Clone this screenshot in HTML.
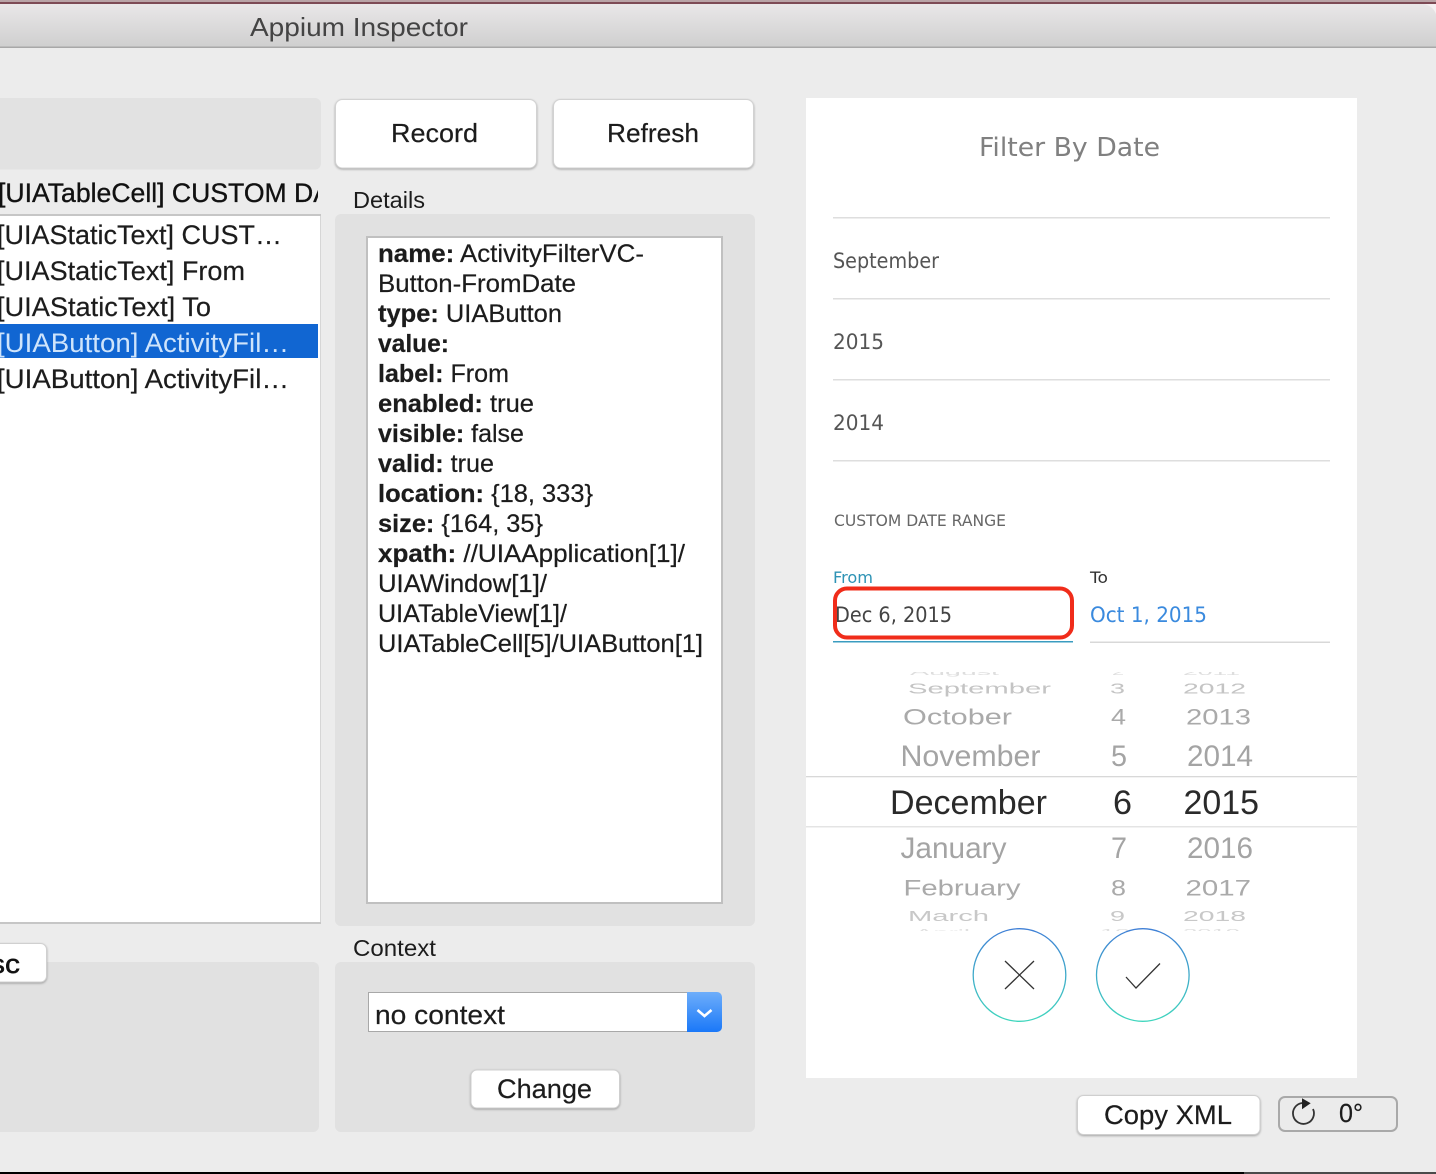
<!DOCTYPE html>
<html><head><meta charset="utf-8"><title>Appium Inspector</title>
<style>
html,body{margin:0;padding:0;background:#ececec;width:1436px;height:1174px;overflow:hidden}
svg{display:block;position:absolute;left:0;top:0}
text{font-family:"Liberation Sans",sans-serif;fill:#1c1c1c;white-space:pre}
.h{font-family:"DejaVu Sans",sans-serif}
.b{font-weight:bold}
.btn{filter:drop-shadow(0 1px 1px rgba(0,0,0,.3))}
</style></head><body>
<svg width="1436" height="1174" viewBox="0 0 1436 1174" xmlns="http://www.w3.org/2000/svg">
<defs>
<linearGradient id="tb" x1="0" y1="0" x2="0" y2="1"><stop offset="0" stop-color="#e9e7e8"/><stop offset="1" stop-color="#cfcfcf"/></linearGradient>
<linearGradient id="ring" x1="0" y1="0" x2="0" y2="1"><stop offset="0" stop-color="#3f7fd6"/><stop offset="1" stop-color="#3fd6bd"/></linearGradient>
<linearGradient id="sel" x1="0" y1="0" x2="0" y2="1"><stop offset="0" stop-color="#6eaefa"/><stop offset="1" stop-color="#1a78f8"/></linearGradient>
<clipPath id="pick"><rect x="806" y="672" width="551" height="259"/></clipPath>
<clipPath id="listhead"><rect x="0" y="170" width="318" height="44"/></clipPath>
<clipPath id="list"><rect x="0" y="214" width="318" height="706"/></clipPath>
</defs>

<!-- window chrome -->
<rect x="0" y="0" width="1436" height="3" fill="#b9a3a6"/>
<rect x="0" y="2" width="1436" height="2" fill="#7d4a55"/>
<rect x="0" y="4" width="1436" height="43" fill="url(#tb)"/>
<rect x="0" y="46.5" width="1436" height="1.5" fill="#a8a8a8"/>
<path d="M1424 4 L1436 4 L1436 14 Q1433 6 1424 4Z" fill="#f5f0f2"/>
<text x="250" y="36" font-size="26" style="fill:#444" textLength="218" lengthAdjust="spacingAndGlyphs">Appium Inspector</text>

<!-- left column -->
<rect x="-10" y="98" width="331" height="71.5" rx="6" fill="#e2e2e2"/>
<g clip-path="url(#listhead)"><text x="-2" y="202" font-size="26.6" stroke="#111" stroke-width=".35" style="fill:#111">[UIATableCell] CUSTOM DATE RANGE</text></g>
<rect x="-4" y="214" width="325" height="710" fill="#d6d6d6"/>
<rect x="-4" y="214" width="325" height="2" fill="#c6c6c6"/>
<rect x="-4" y="922" width="325" height="2" fill="#c6c6c6"/>
<rect x="-4" y="216" width="324" height="706" fill="#fff"/>
<rect x="0" y="324" width="318" height="34" fill="#1166d2"/>
<g clip-path="url(#list)" stroke="#1c1c1c" stroke-width=".2">
<text x="-3" y="244" font-size="27" textLength="285" lengthAdjust="spacingAndGlyphs">[UIAStaticText] CUST…</text>
<text x="-3" y="280" font-size="27" textLength="248" lengthAdjust="spacingAndGlyphs">[UIAStaticText] From</text>
<text x="-3" y="316" font-size="27" textLength="214" lengthAdjust="spacingAndGlyphs">[UIAStaticText] To</text>
<text x="-3" y="352" font-size="27" textLength="292" lengthAdjust="spacingAndGlyphs" stroke="none" style="fill:#cfe4fb">[UIAButton] ActivityFil…</text>
<text x="-3" y="388" font-size="27" textLength="292" lengthAdjust="spacingAndGlyphs">[UIAButton] ActivityFil…</text>
</g>
<rect x="-10" y="962" width="329" height="170" rx="6" fill="#e1e1e1"/>
<rect class="btn" x="-20" y="943.5" width="66.5" height="38.5" rx="6" fill="#fff" stroke="#d0d0d0" stroke-width="1"/>
<text x="-30" y="973" font-size="27" textLength="50" lengthAdjust="spacingAndGlyphs" stroke="#111" stroke-width=".5" style="fill:#111">Esc</text>

<!-- record / refresh -->
<rect class="btn" x="335.5" y="99.5" width="201" height="68.5" rx="7" fill="#fff" stroke="#d2d2d2"/>
<rect class="btn" x="553.5" y="99.5" width="200" height="68.5" rx="7" fill="#fff" stroke="#d2d2d2"/>
<text x="391" y="142" font-size="26" textLength="87" lengthAdjust="spacingAndGlyphs" stroke="#1c1c1c" stroke-width=".2">Record</text>
<text x="607" y="142" font-size="26" textLength="92" lengthAdjust="spacingAndGlyphs" stroke="#1c1c1c" stroke-width=".2">Refresh</text>

<!-- details -->
<text x="353" y="208" font-size="23" textLength="72" lengthAdjust="spacingAndGlyphs">Details</text>
<rect x="335" y="214" width="420" height="712" rx="6" fill="#e1e1e1"/>
<rect x="367" y="237" width="355" height="666" fill="#fff" stroke="#c0c0c0" stroke-width="2"/>
<g stroke="#111" stroke-width=".2">
<text x="378" y="262" font-size="25" textLength="266" lengthAdjust="spacingAndGlyphs"><tspan class="b">name:</tspan> ActivityFilterVC-</text>
<text x="378" y="292" font-size="25" textLength="198" lengthAdjust="spacingAndGlyphs">Button-FromDate</text>
<text x="378" y="322" font-size="25" textLength="184" lengthAdjust="spacingAndGlyphs"><tspan class="b">type:</tspan> UIAButton</text>
<text x="378" y="352" font-size="25" textLength="71" lengthAdjust="spacingAndGlyphs" class="b">value:</text>
<text x="378" y="382" font-size="25" textLength="131" lengthAdjust="spacingAndGlyphs"><tspan class="b">label:</tspan> From</text>
<text x="378" y="412" font-size="25" textLength="156" lengthAdjust="spacingAndGlyphs"><tspan class="b">enabled:</tspan> true</text>
<text x="378" y="442" font-size="25" textLength="146" lengthAdjust="spacingAndGlyphs"><tspan class="b">visible:</tspan> false</text>
<text x="378" y="472" font-size="25" textLength="116" lengthAdjust="spacingAndGlyphs"><tspan class="b">valid:</tspan> true</text>
<text x="378" y="502" font-size="25" textLength="215" lengthAdjust="spacingAndGlyphs"><tspan class="b">location:</tspan> {18, 333}</text>
<text x="378" y="532" font-size="25" textLength="165" lengthAdjust="spacingAndGlyphs"><tspan class="b">size:</tspan> {164, 35}</text>
<text x="378" y="562" font-size="25" textLength="307" lengthAdjust="spacingAndGlyphs"><tspan class="b">xpath:</tspan> //UIAApplication[1]/</text>
<text x="378" y="592" font-size="25" textLength="169" lengthAdjust="spacingAndGlyphs">UIAWindow[1]/</text>
<text x="378" y="622" font-size="25" textLength="189" lengthAdjust="spacingAndGlyphs">UIATableView[1]/</text>
<text x="378" y="652" font-size="25" textLength="325" lengthAdjust="spacingAndGlyphs">UIATableCell[5]/UIAButton[1]</text>
</g>

<!-- context -->
<text x="353" y="956" font-size="23" textLength="83" lengthAdjust="spacingAndGlyphs">Context</text>
<rect x="335" y="962" width="420" height="170" rx="6" fill="#e1e1e1"/>
<rect x="368.5" y="992.5" width="320" height="39" fill="#fff" stroke="#a8a8a8"/>
<path d="M687 992 H717 a5 5 0 0 1 5 5 V1027 a5 5 0 0 1 -5 5 H687Z" fill="url(#sel)"/>
<path d="M697.5 1010 L704.5 1016 L711.5 1010" fill="none" stroke="#fff" stroke-width="2.6"/>
<text x="375" y="1024" font-size="27" textLength="130" lengthAdjust="spacingAndGlyphs" stroke="#1c1c1c" stroke-width=".2">no context</text>
<rect class="btn" x="471" y="1070" width="148.5" height="38" rx="6" fill="#fff" stroke="#cfcfcf"/>
<text x="497" y="1098" font-size="27" textLength="95" lengthAdjust="spacingAndGlyphs" stroke="#1c1c1c" stroke-width=".2">Change</text>

<!-- phone screen -->
<rect x="806" y="98" width="551" height="980" fill="#fff"/>
<text class="h" x="979" y="156" font-size="26" textLength="181" lengthAdjust="spacingAndGlyphs" style="fill:#808080">Filter By Date</text>
<rect x="833" y="217" width="497" height="1.5" fill="#dedede"/>
<rect x="833" y="298" width="497" height="1.5" fill="#dedede"/>
<rect x="833" y="379" width="497" height="1.5" fill="#dedede"/>
<rect x="833" y="460" width="497" height="1.5" fill="#dedede"/>
<text class="h" x="833" y="268" font-size="21" textLength="106" lengthAdjust="spacingAndGlyphs" style="fill:#555">September</text>
<text class="h" x="833" y="349" font-size="21" textLength="51" lengthAdjust="spacingAndGlyphs" style="fill:#555">2015</text>
<text class="h" x="833" y="430" font-size="21" textLength="51" lengthAdjust="spacingAndGlyphs" style="fill:#555">2014</text>
<text class="h" x="834" y="526" font-size="16" textLength="172" lengthAdjust="spacingAndGlyphs" style="fill:#666">CUSTOM DATE RANGE</text>
<text class="h" x="833" y="583" font-size="16" textLength="40" lengthAdjust="spacingAndGlyphs" style="fill:#2e93b5">From</text>
<text class="h" x="1090" y="583" font-size="16" textLength="18" lengthAdjust="spacingAndGlyphs" style="fill:#333">To</text>
<text class="h" x="835" y="622" font-size="21" textLength="117" lengthAdjust="spacingAndGlyphs" style="fill:#444">Dec 6, 2015</text>
<text class="h" x="1090" y="622" font-size="21" textLength="117" lengthAdjust="spacingAndGlyphs" style="fill:#3a8ade">Oct 1, 2015</text>
<rect x="833" y="641" width="240" height="1.5" fill="#3a9cc0"/>
<rect x="1090" y="641.5" width="240" height="1.5" fill="#d8d8d8"/>
<rect x="835" y="588.5" width="237" height="49" rx="12" fill="none" stroke="#f02c1a" stroke-width="4"/>

<!-- picker -->
<g clip-path="url(#pick)">
<text transform="translate(910 675) scale(1 .28)" font-size="29" textLength="89" lengthAdjust="spacingAndGlyphs" style="fill:#dedede">August</text>
<text transform="translate(1112 675) scale(1 .28)" font-size="29" textLength="12" lengthAdjust="spacingAndGlyphs" style="fill:#dedede">2</text>
<text transform="translate(1183 675) scale(1 .28)" font-size="29" textLength="57" lengthAdjust="spacingAndGlyphs" style="fill:#dedede">2011</text>
<text transform="translate(908 693.5) scale(1 .5)" font-size="29" textLength="143" lengthAdjust="spacingAndGlyphs" style="fill:#c4c4c4">September</text>
<text transform="translate(1110 693.5) scale(1 .5)" font-size="29" textLength="15" lengthAdjust="spacingAndGlyphs" style="fill:#c4c4c4">3</text>
<text transform="translate(1183 693.5) scale(1 .5)" font-size="29" textLength="63" lengthAdjust="spacingAndGlyphs" style="fill:#c4c4c4">2012</text>
<text transform="translate(903 724.5) scale(1 .78)" font-size="29" textLength="109" lengthAdjust="spacingAndGlyphs" style="fill:#aaa">October</text>
<text transform="translate(1111 724.5) scale(1 .78)" font-size="29" textLength="15" lengthAdjust="spacingAndGlyphs" style="fill:#aaa">4</text>
<text transform="translate(1186 724.5) scale(1 .78)" font-size="29" textLength="65" lengthAdjust="spacingAndGlyphs" style="fill:#aaa">2013</text>
<text x="900.5" y="766" font-size="30" textLength="140" lengthAdjust="spacingAndGlyphs" style="fill:#a4a4a4">November</text>
<text x="1111" y="766" font-size="30" textLength="16" lengthAdjust="spacingAndGlyphs" style="fill:#a4a4a4">5</text>
<text x="1187" y="766" font-size="30" textLength="66" lengthAdjust="spacingAndGlyphs" style="fill:#a4a4a4">2014</text>
<text x="890" y="814" font-size="34" textLength="157" lengthAdjust="spacingAndGlyphs" style="fill:#2a2a2a">December</text>
<text x="1113" y="814" font-size="34" textLength="19" lengthAdjust="spacingAndGlyphs" style="fill:#2a2a2a">6</text>
<text x="1183.5" y="814" font-size="34" textLength="75.5" lengthAdjust="spacingAndGlyphs" style="fill:#2a2a2a">2015</text>
<text x="900.5" y="858" font-size="30" textLength="106" lengthAdjust="spacingAndGlyphs" style="fill:#a4a4a4">January</text>
<text x="1111" y="858" font-size="30" textLength="16" lengthAdjust="spacingAndGlyphs" style="fill:#a4a4a4">7</text>
<text x="1187" y="858" font-size="30" textLength="66" lengthAdjust="spacingAndGlyphs" style="fill:#a4a4a4">2016</text>
<text transform="translate(903.5 895.5) scale(1 .78)" font-size="29" textLength="117" lengthAdjust="spacingAndGlyphs" style="fill:#aaa">February</text>
<text transform="translate(1111 895.5) scale(1 .78)" font-size="29" textLength="15" lengthAdjust="spacingAndGlyphs" style="fill:#aaa">8</text>
<text transform="translate(1185.5 895.5) scale(1 .78)" font-size="29" textLength="65.5" lengthAdjust="spacingAndGlyphs" style="fill:#aaa">2017</text>
<text transform="translate(908 921) scale(1 .5)" font-size="29" textLength="81" lengthAdjust="spacingAndGlyphs" style="fill:#c8c8c8">March</text>
<text transform="translate(1110 921) scale(1 .5)" font-size="29" textLength="15" lengthAdjust="spacingAndGlyphs" style="fill:#c8c8c8">9</text>
<text transform="translate(1183 921) scale(1 .5)" font-size="29" textLength="63" lengthAdjust="spacingAndGlyphs" style="fill:#c8c8c8">2018</text>
<text transform="translate(915 935) scale(1 .28)" font-size="29" textLength="55" lengthAdjust="spacingAndGlyphs" style="fill:#e0e0e0">April</text>
<text transform="translate(1100 935) scale(1 .28)" font-size="29" textLength="30" lengthAdjust="spacingAndGlyphs" style="fill:#e0e0e0">10</text>
<text transform="translate(1183 935) scale(1 .28)" font-size="29" textLength="57" lengthAdjust="spacingAndGlyphs" style="fill:#e0e0e0">2019</text>
</g>
<rect x="806" y="776" width="551" height="1.3" fill="#d8d8d8"/>
<rect x="806" y="826" width="551" height="1.5" fill="#e4e4e4"/>

<!-- round buttons -->
<circle cx="1019.5" cy="975" r="46.3" fill="#fff" stroke="url(#ring)" stroke-width="1.3"/>
<circle cx="1142.8" cy="975" r="46.3" fill="#fff" stroke="url(#ring)" stroke-width="1.3"/>
<path d="M1005 961 L1034 989 M1034 961 L1005 989" fill="none" stroke="#333" stroke-width="1.3"/>
<path d="M1126 977 L1136 988 L1160 963.5" fill="none" stroke="#333" stroke-width="1.3"/>

<!-- bottom controls -->
<rect class="btn" x="1077.5" y="1095.5" width="182.5" height="39" rx="6" fill="#fff" stroke="#cfcfcf"/>
<text x="1104" y="1124" font-size="27" textLength="128" lengthAdjust="spacingAndGlyphs" stroke="#1c1c1c" stroke-width=".2">Copy XML</text>
<rect x="1279" y="1097" width="118" height="34" rx="6" fill="#ebebeb" stroke="#a9a9a9" stroke-width="2"/>
<path d="M1302 1103 A10.5 10.5 0 1 0 1313 1109" fill="none" stroke="#333" stroke-width="1.8"/>
<path d="M1302 1098.3 L1310.7 1103.3 L1302 1109.3Z" fill="#222"/>
<text x="1339" y="1122" font-size="26" textLength="24" lengthAdjust="spacingAndGlyphs" stroke="#1c1c1c" stroke-width=".2">0°</text>

<!-- bottom edge -->
<rect x="0" y="1172" width="1244" height="2" fill="#000"/>
<rect x="1244" y="1172" width="192" height="2" fill="#4a4a4a"/>
</svg>
</body></html>
